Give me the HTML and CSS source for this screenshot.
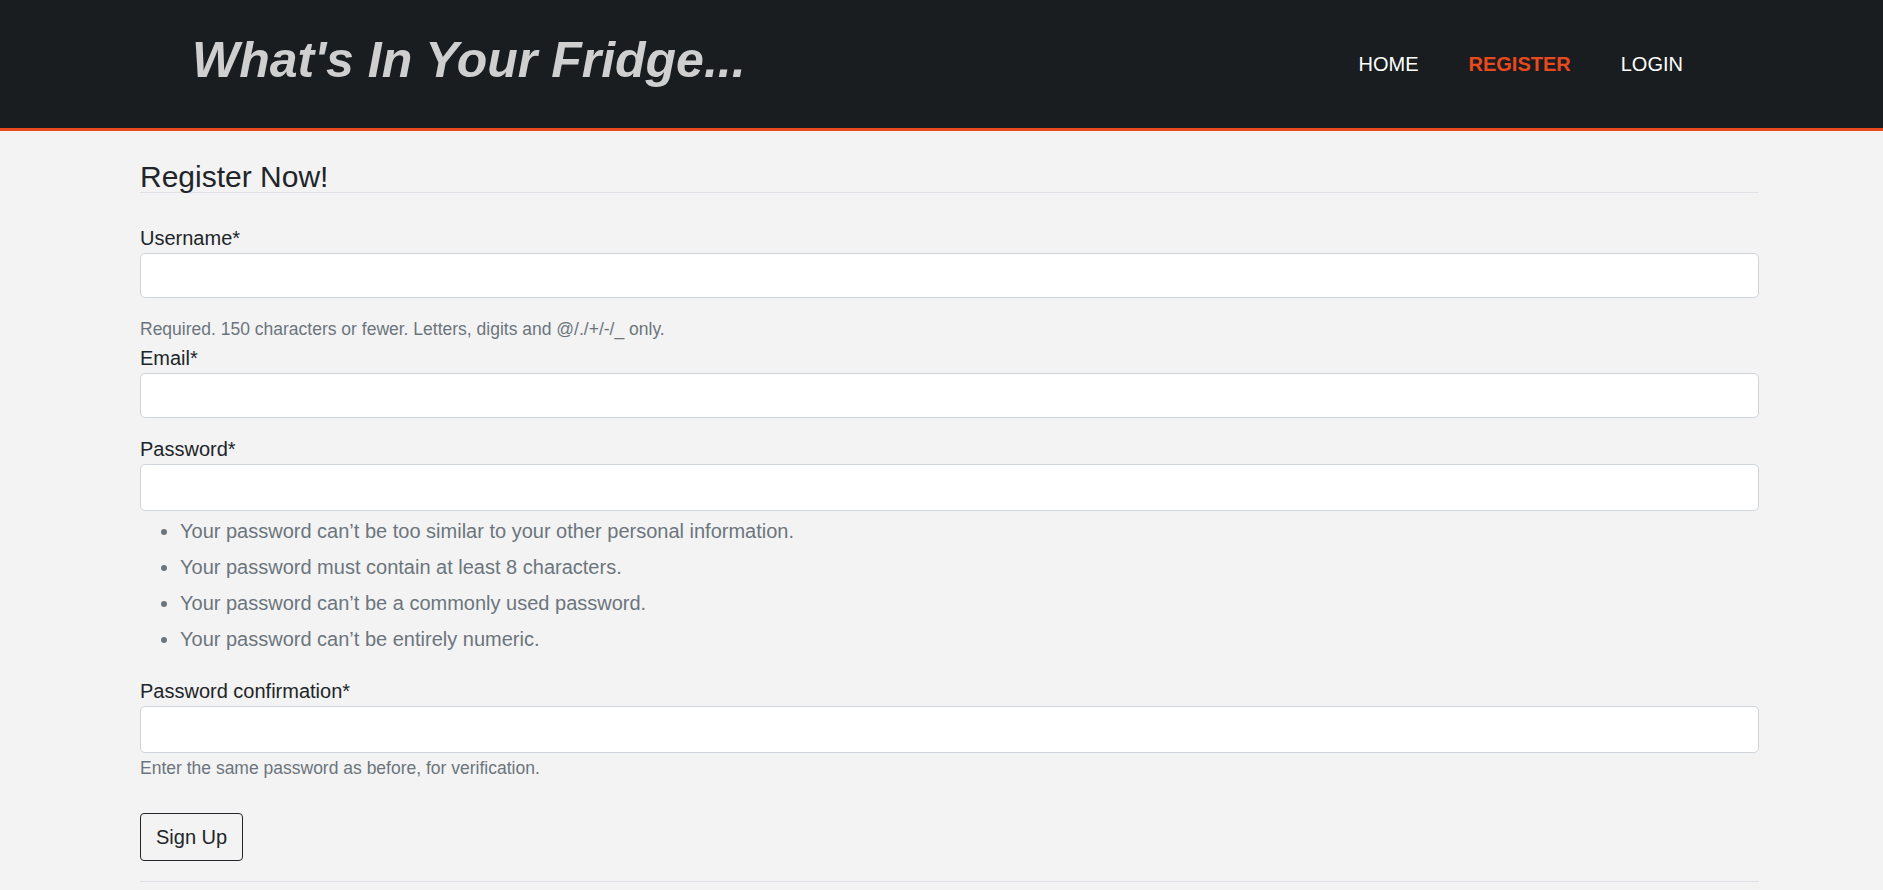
FILE: index.html
```html
<!DOCTYPE html>
<html lang="en">
<head>
<meta charset="utf-8">
<title>Register - What's In Your Fridge</title>
<link rel="stylesheet" href="styles.css">
</head>
<body>
<header class="site-header">
  <h1 class="brand">What's In Your Fridge...</h1>
  <nav class="nav">
    <a class="nav-link" href="#">HOME</a>
    <a class="nav-link active" href="#">REGISTER</a>
    <a class="nav-link" href="#">LOGIN</a>
  </nav>
</header>
<main class="content">
  <h2 class="page-title">Register Now!</h2>
  <form class="form">
    <div class="group">
      <label class="label" for="username">Username*</label>
      <input class="input" id="username" type="text">
    </div>
    <small class="help help-block">Required. 150 characters or fewer. Letters, digits and @/./+/-/_ only.</small>
    <div class="group">
      <label class="label" for="email">Email*</label>
      <input class="input" id="email" type="email">
    </div>
    <div class="group group-tight">
      <label class="label" for="password1">Password*</label>
      <input class="input input-pw" id="password1" type="password">
      <ul class="rules">
        <li>Your password can’t be too similar to your other personal information.</li>
        <li>Your password must contain at least 8 characters.</li>
        <li>Your password can’t be a commonly used password.</li>
        <li>Your password can’t be entirely numeric.</li>
      </ul>
    </div>
    <div class="group group-tight">
      <label class="label" for="password2">Password confirmation*</label>
      <input class="input input-pw" id="password2" type="password">
      <small class="help help-inline">Enter the same password as before, for verification.</small>
    </div>
    <button class="btn" type="button">Sign Up</button>
  </form>
  <hr class="rule">
</main>
</body>
</html>
```
FILE: styles.css
```css
* {
  box-sizing: border-box;
}

html, body {
  margin: 0;
  padding: 0;
}

body {
  background: #f3f3f3;
  color: #212529;
  font-family: "Liberation Sans", Arial, sans-serif;
  font-size: 20px;
  line-height: 30px;
  overflow: hidden;
}

.site-header {
  height: 131px;
  background: #191d20;
  border-bottom: 3px solid #e8491d;
  display: flex;
  align-items: center;
}

.brand {
  margin: 0 0 8px 192px;
  font-size: 50px;
  line-height: 56px;
  font-weight: 700;
  font-style: italic;
  color: #cfcfcf;
}

.nav {
  margin-left: auto;
  margin-right: 175px;
  display: flex;
}

.nav-link {
  padding: 0 25px;
  color: #ffffff;
  text-decoration: none;
  font-size: 20px;
  line-height: 30px;
}

.nav-link.active {
  color: #e8491d;
  font-weight: 700;
}

.content {
  margin-left: 140px;
  width: 1619px;
}

.page-title {
  margin: 31px 0 30px;
  font-size: 30px;
  line-height: 30px;
  font-weight: 400;
  border-bottom: 1px solid #dee2e6;
}

.form {
  display: flex;
  flex-direction: column;
  align-items: flex-start;
}

.group {
  width: 100%;
  display: flex;
  flex-direction: column;
  margin-bottom: 16px;
}

.group-tight {
  margin-bottom: 0;
}

.label {
  display: block;
  line-height: 30px;
}

.input {
  display: block;
  width: 100%;
  height: 45px;
  background: #ffffff;
  border: 1px solid #ced4da;
  border-radius: 5px;
  font: inherit;
  padding: 0 12px;
}

.input-pw {
  height: 47px;
}

.help {
  display: block;
  color: #6c757d;
  font-size: 17.5px;
  line-height: 28px;
}

.help-block {
  margin-top: 1px;
}

.help-inline {
  margin-top: 1px;
}

.rules {
  margin: 2px 0 19px;
  padding-left: 40px;
  color: #6c757d;
  line-height: 36px;
}

.btn {
  margin-top: 31px;
  height: 48px;
  padding: 8px 15px;
  background: transparent;
  border: 1px solid #212529;
  border-radius: 4px;
  color: #212529;
  font: inherit;
  line-height: 30px;
}

.rule {
  margin: 20px 0 0;
  border: 0;
  border-top: 1px solid #dcdfe3;
}
```
